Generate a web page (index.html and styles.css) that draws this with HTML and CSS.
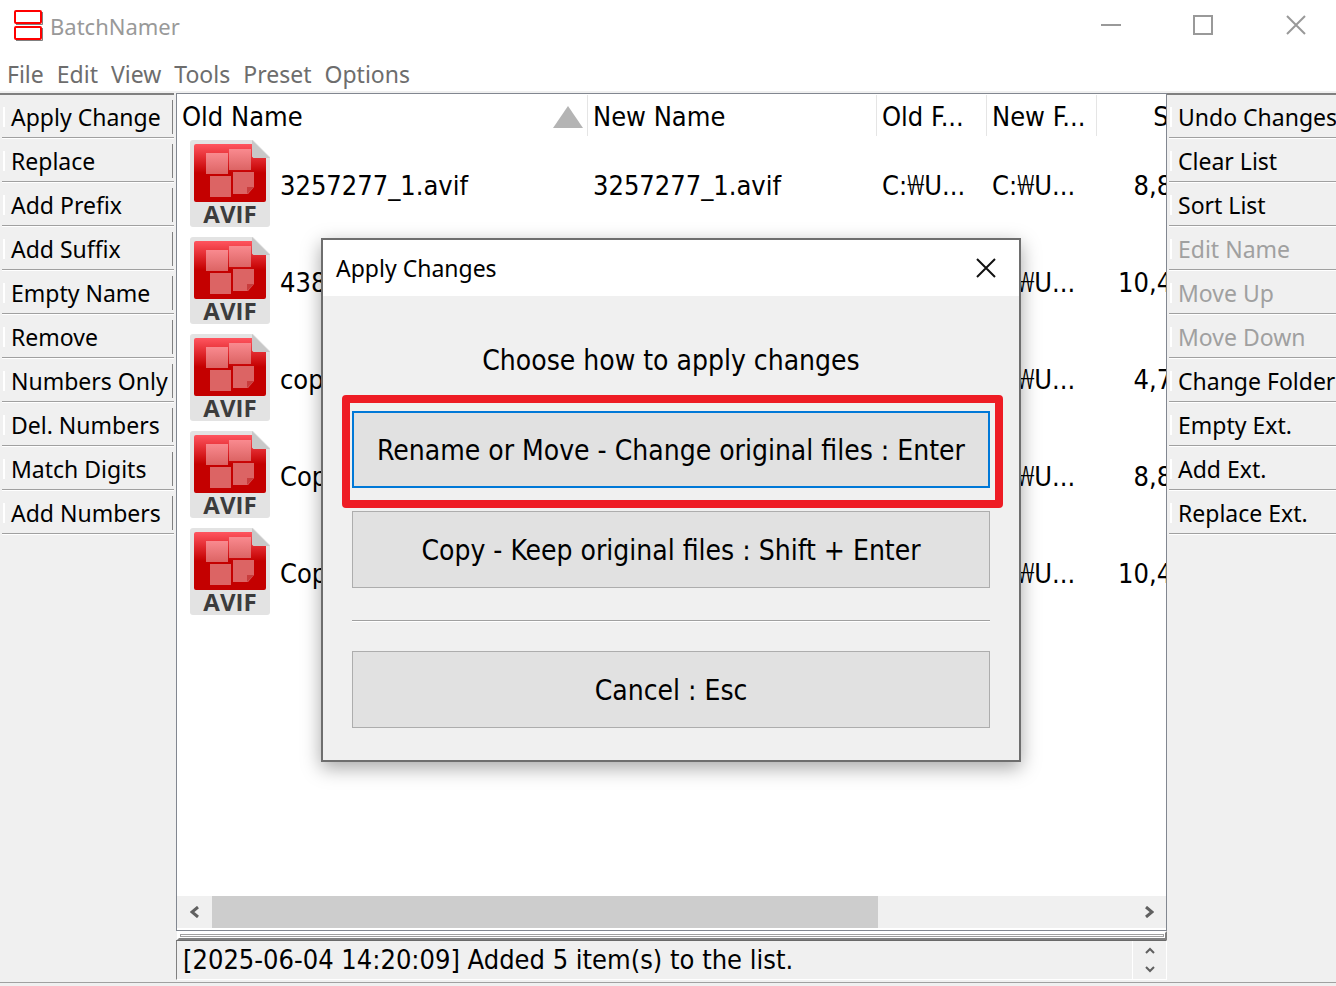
FILE: index.html
```
<!DOCTYPE html>
<html lang="en">
<head>
    <meta charset="UTF-8">
    <meta name="viewport" content="width=device-width, initial-scale=1.0">
    <title>BatchNamer</title>
    <link rel="stylesheet" href="styles.css">
</head>
<body>
    <!-- file icon used in every row -->
    <svg class="defs" width="0" height="0" aria-hidden="true">
        <defs>
            <linearGradient id="red" x1="0" y1="0" x2="0" y2="1">
                <stop offset="0" stop-color="#ff555f"/>
                <stop offset="0.5" stop-color="#c40000"/>
                <stop offset="1" stop-color="#c40000"/>
            </linearGradient>
            <linearGradient id="tile" x1="0" y1="0" x2="0" y2="1">
                <stop offset="0" stop-color="#f98a8f"/>
                <stop offset="1" stop-color="#dc6464"/>
            </linearGradient>
            <symbol id="avif" viewBox="0 0 80 87">
                <path d="M3 0H63L80 17V84Q80 87 77 87H3Q0 87 0 84V3Q0 0 3 0Z" fill="#e3e3e3"/>
                <path d="M6 4H62V15Q62 18 65 18H76V60Q76 62 74 62H6Q4 62 4 60V6Q4 4 6 4Z" fill="url(#red)"/>
                <path d="M62 0L80 18H65Q62 18 62 15Z" fill="#c8c8c8"/>
                <rect x="16" y="13" width="22" height="21" fill="url(#tile)"/>
                <rect x="39" y="9" width="22" height="21" fill="url(#tile)"/>
                <rect x="20" y="36" width="21" height="21" fill="#dc6464"/>
                <path d="M43 32H64V47L58 54H43Z" fill="#dc6464"/>
                <path d="M57 47H64L57 54Z" fill="#c93c3c"/>
                <text x="40" y="83" text-anchor="middle" class="icon-text">AVIF</text>
            </symbol>
        </defs>
    </svg>

    <header class="titlebar">
        <svg class="logo" width="32" height="32" viewBox="0 0 32 32" fill="none">
            <path d="M3 14.5H29.5V2M3 30.5H29.5V18" stroke="#808080"/>
            <rect x="2" y="1" width="26" height="12" rx="1" stroke="#f00" stroke-width="2"/>
            <rect x="2" y="17" width="26" height="12" rx="1" stroke="#f00" stroke-width="2"/>
        </svg>
        <h1>BatchNamer</h1>
        <div class="window-buttons">
            <button aria-label="Minimize"><svg width="20" height="20"><path d="M0 10H20" stroke="#999" stroke-width="2"/></svg></button>
            <button aria-label="Maximize"><svg width="20" height="20"><rect x="1" y="1" width="18" height="18" fill="none" stroke="#999" stroke-width="2"/></svg></button>
            <button aria-label="Close"><svg width="20" height="20"><path d="M1 1L19 19M19 1L1 19" stroke="#999" stroke-width="2"/></svg></button>
        </div>
    </header>

    <nav class="menubar">
        <button>File</button>
        <button>Edit</button>
        <button>View</button>
        <button>Tools</button>
        <button>Preset</button>
        <button>Options</button>
    </nav>

    <div class="main">
        <div class="toolbar left">
            <button>Apply Change</button>
            <button>Replace</button>
            <button>Add Prefix</button>
            <button>Add Suffix</button>
            <button>Empty Name</button>
            <button>Remove</button>
            <button>Numbers Only</button>
            <button>Del. Numbers</button>
            <button>Match Digits</button>
            <button>Add Numbers</button>
        </div>

        <div class="center">
            <div class="list">
                <div class="list-body">
                    <table>
                        <colgroup>
                            <col class="col-name">
                            <col class="col-new">
                            <col class="col-folder">
                            <col class="col-folder">
                            <col class="col-size">
                        </colgroup>
                        <thead>
                            <tr>
                                <th><div class="sorted">Old Name <svg width="30" height="22"><path d="M15 0L30 22H0Z" fill="#b4b4b4"/></svg></div></th>
                                <th>New Name</th>
                                <th>Old F...</th>
                                <th>New F...</th>
                                <th class="size">Size</th>
                            </tr>
                        </thead>
                        <tbody>
                            <tr>
                                <td><div class="file"><svg width="80" height="87"><use href="#avif"/></svg>3257277_1.avif</div></td>
                                <td>3257277_1.avif</td>
                                <td>C:<span class="won">₩</span>U...</td>
                                <td>C:<span class="won">₩</span>U...</td>
                                <td class="size">8,880</td>
                            </tr>
                            <tr>
                                <td><div class="file"><svg width="80" height="87"><use href="#avif"/></svg>438</div></td>
                                <td></td>
                                <td>C:<span class="won">₩</span>U...</td>
                                <td>C:<span class="won">₩</span>U...</td>
                                <td class="size">10,440</td>
                            </tr>
                            <tr>
                                <td><div class="file"><svg width="80" height="87"><use href="#avif"/></svg>cop</div></td>
                                <td></td>
                                <td>C:<span class="won">₩</span>U...</td>
                                <td>C:<span class="won">₩</span>U...</td>
                                <td class="size">4,770</td>
                            </tr>
                            <tr>
                                <td><div class="file"><svg width="80" height="87"><use href="#avif"/></svg>Cop</div></td>
                                <td></td>
                                <td>C:<span class="won">₩</span>U...</td>
                                <td>C:<span class="won">₩</span>U...</td>
                                <td class="size">8,880</td>
                            </tr>
                            <tr>
                                <td><div class="file"><svg width="80" height="87"><use href="#avif"/></svg>Cop</div></td>
                                <td></td>
                                <td>C:<span class="won">₩</span>U...</td>
                                <td>C:<span class="won">₩</span>U...</td>
                                <td class="size">10,440</td>
                            </tr>
                        </tbody>
                    </table>
                </div>
                <div class="scrollbar">
                    <button aria-label="Scroll left"><svg width="10" height="12"><path d="M8 1L2 6L8 11" fill="none" stroke="#606060" stroke-width="3"/></svg></button>
                    <div class="track"><div class="thumb"></div></div>
                    <button aria-label="Scroll right"><svg width="10" height="12"><path d="M2 1L8 6L2 11" fill="none" stroke="#606060" stroke-width="3"/></svg></button>
                </div>
            </div>
            <div class="splitter"></div>
            <div class="log">
                <p>[2025-06-04 14:20:09] Added 5 item(s) to the list.</p>
                <div class="spin">
                    <button aria-label="Scroll up"><svg width="10" height="7"><path d="M1 6L5 2L9 6" fill="none" stroke="#606060" stroke-width="2"/></svg></button>
                    <button aria-label="Scroll down"><svg width="10" height="7"><path d="M1 1L5 5L9 1" fill="none" stroke="#606060" stroke-width="2"/></svg></button>
                </div>
            </div>
        </div>

        <div class="toolbar right">
            <button>Undo Changes</button>
            <button>Clear List</button>
            <button>Sort List</button>
            <button disabled>Edit Name</button>
            <button disabled>Move Up</button>
            <button disabled>Move Down</button>
            <button>Change Folder</button>
            <button>Empty Ext.</button>
            <button>Add Ext.</button>
            <button>Replace Ext.</button>
        </div>
    </div>
    <footer class="statusbar"></footer>

    <div class="dialog" role="dialog" aria-labelledby="dialog-title">
        <div class="dialog-title">
            <h2 id="dialog-title">Apply Changes</h2>
            <button aria-label="Close"><svg width="20" height="20"><path d="M1 1L19 19M19 1L1 19" stroke="#111" stroke-width="2"/></svg></button>
        </div>
        <div class="dialog-body">
            <p>Choose how to apply changes</p>
            <div class="highlight">
                <button class="choice default">Rename or Move - Change original files : Enter</button>
            </div>
            <button class="choice">Copy - Keep original files : Shift + Enter</button>
            <hr>
            <button class="choice">Cancel : Esc</button>
        </div>
    </div>
</body>
</html>
```
FILE: styles.css
```
* {
    box-sizing: border-box;
}
body {
    margin: 0;
    height: 100vh;
    display: flex;
    flex-direction: column;
    overflow: hidden;
    background: #fff;
    color: #000;
    font-family: "Noto Sans", "Open Sans", sans-serif;
    font-size: 23px;
}
button {
    margin: 0;
    padding: 0;
    border: none;
    background: none;
    color: inherit;
    font: inherit;
}
h1, h2, p {
    margin: 0;
    font-size: inherit;
    font-weight: normal;
}
svg {
    display: block;
    flex: none;
}
.defs {
    position: absolute;
}

/* title bar and menu */
.titlebar {
    height: 52px;
    flex: none;
    display: flex;
    align-items: center;
    padding-left: 13px;
    color: #999;
}
.titlebar h1 {
    margin-left: 5px;
    font-size: 22px;
}
.window-buttons {
    display: flex;
    margin-left: auto;
}
.window-buttons button {
    width: 92px;
    height: 52px;
    padding-bottom: 2px;
    display: flex;
    justify-content: center;
    align-items: center;
}
.window-buttons button:last-child {
    width: 80px;
    margin-left: 7px;
}
.menubar {
    height: 41px;
    flex: none;
    display: flex;
    align-items: center;
    gap: 13px;
    padding: 5px 7px 0;
    color: #6d6d6d;
    border-bottom: 2px solid #f0f0f0;
}

/* middle area */
.main {
    flex: 1;
    min-height: 0;
    display: flex;
    background: #f0f0f0;
}
.toolbar {
    flex: none;
    display: flex;
    flex-direction: column;
    border-top: 2px solid #808080;
}
.left {
    width: 174px;
    margin-right: 2px;
}
.right {
    width: 169px;
    overflow: hidden;
}
.toolbar button {
    height: 44px;
    flex: none;
    display: flex;
    align-items: center;
    margin-left: 2px;
    padding-top: 2px;
    text-align: left;
    white-space: nowrap;
    border-bottom: 1px solid #a0a0a0;
    box-shadow: 0 1px #fff;
}
.toolbar button:first-child {
    height: 43px;
}
.toolbar button::before {
    content: "";
    flex: none;
    width: 2px;
    height: 20px;
    margin: 0 6px 0 1px;
    background: #fff;
}
.left button::after {
    content: "";
    width: 1px;
    height: 34px;
    margin: 0 1px 0 auto;
    background: #808080;
}
.toolbar button:disabled {
    color: #a0a0a0;
}

.center {
    flex: 1;
    min-width: 0;
    display: flex;
    flex-direction: column;
    font-family: "DejaVu Sans Condensed", "DejaVu Sans", "Noto Sans CJK KR", sans-serif;
    font-size: 27px;
}
.list {
    flex: 1;
    min-height: 0;
    display: flex;
    flex-direction: column;
    border: 1px solid #828790;
    background: #fff;
}
.list-body {
    flex: 1;
    min-height: 0;
    overflow: hidden;
}
table {
    width: 1030px;
    table-layout: fixed;
    border-collapse: collapse;
}
.col-name {
    width: 411px;
}
.col-new {
    width: 289px;
}
.col-folder {
    width: 110px;
}
.col-size {
    width: 110px;
}
th, td {
    padding: 0 5px;
    font-weight: normal;
    line-height: 32px;
    text-align: left;
    white-space: nowrap;
    overflow: hidden;
}
th {
    height: 43px;
    padding-top: 2px;
    background: linear-gradient(#e5e5e5, #e5e5e5) right 0 top 1px / 1px 41px no-repeat;
}
td {
    height: 97px;
}
th.size, td.size {
    padding-right: 4px;
    text-align: right;
}
.sorted {
    display: flex;
    align-items: center;
    justify-content: space-between;
}
.file {
    display: flex;
    align-items: center;
    gap: 10px;
    padding-left: 8px;
}
.file svg {
    margin-bottom: 4px;
}
.won {
    font-family: "Open Sans", "Noto Sans", sans-serif;
    font-weight: 300;
}
.icon-text {
    font: bold 24px "Open Sans", "Noto Sans", sans-serif;
    fill: #3c3c3c;
}
.scrollbar {
    height: 34px;
    flex: none;
    display: flex;
    background: #f0f0f0;
    border-bottom: 2px solid #fff;
}
.scrollbar button {
    width: 35px;
    display: flex;
    justify-content: center;
    align-items: center;
}
.track {
    flex: 1;
}
.thumb {
    width: 72.5%;
    height: 100%;
    background: #cdcdcd;
}
.splitter {
    height: 9px;
    flex: none;
    margin-left: 1px;
    border: 2px solid #fff;
    border-right-color: #808080;
    border-bottom-color: #808080;
    background: #fff;
    outline: 1px solid #a0a0a0;
    outline-offset: -4px;
}
.log {
    height: 40px;
    flex: none;
    display: flex;
    border: 1px solid #fff;
    border-top-color: #696969;
    border-left-color: #808080;
}
.log p {
    flex: 1;
    padding-left: 6px;
    line-height: 38px;
}
.spin {
    width: 34px;
    display: flex;
    flex-direction: column;
    border-left: 1px solid #fff;
}
.spin button {
    flex: 1;
    display: flex;
    justify-content: center;
    align-items: center;
}
.statusbar {
    height: 6px;
    flex: none;
    background: linear-gradient(#a0a0a0, #a0a0a0) 0 2px / 100% 1px no-repeat #f0f0f0;
}

/* dialog over the list */
.dialog {
    position: absolute;
    left: 321px;
    top: 238px;
    width: 700px;
    border: 2px solid #6e6e6e;
    background: #f0f0f0;
    box-shadow: 0 6px 18px rgba(0, 0, 0, 0.35);
}
.dialog-title {
    height: 56px;
    display: flex;
    align-items: center;
    justify-content: space-between;
    padding: 0 23px 0 13px;
    background: #fff;
}
.dialog-body {
    display: flex;
    flex-direction: column;
    padding: 45px 29px 32px;
    font-family: "DejaVu Sans Condensed", "DejaVu Sans", sans-serif;
    font-size: 28px;
}
.dialog-body p {
    line-height: 40px;
    text-align: center;
}
.highlight {
    display: flex;
    margin: 14px -13px 3px -10px;
    padding: 8px 5px 12px 2px;
    border: 8px solid #ee1c24;
    border-radius: 4px;
}
.choice {
    width: 100%;
    height: 77px;
    padding-top: 2px;
    border: 1px solid #adadad;
    background: #e1e1e1;
}
.default {
    border: 2px solid #0078d7;
}
hr {
    width: 100%;
    margin: 32px 0 29px;
    border: none;
    border-top: 1px solid #a0a0a0;
    border-bottom: 1px solid #fff;
}
```
